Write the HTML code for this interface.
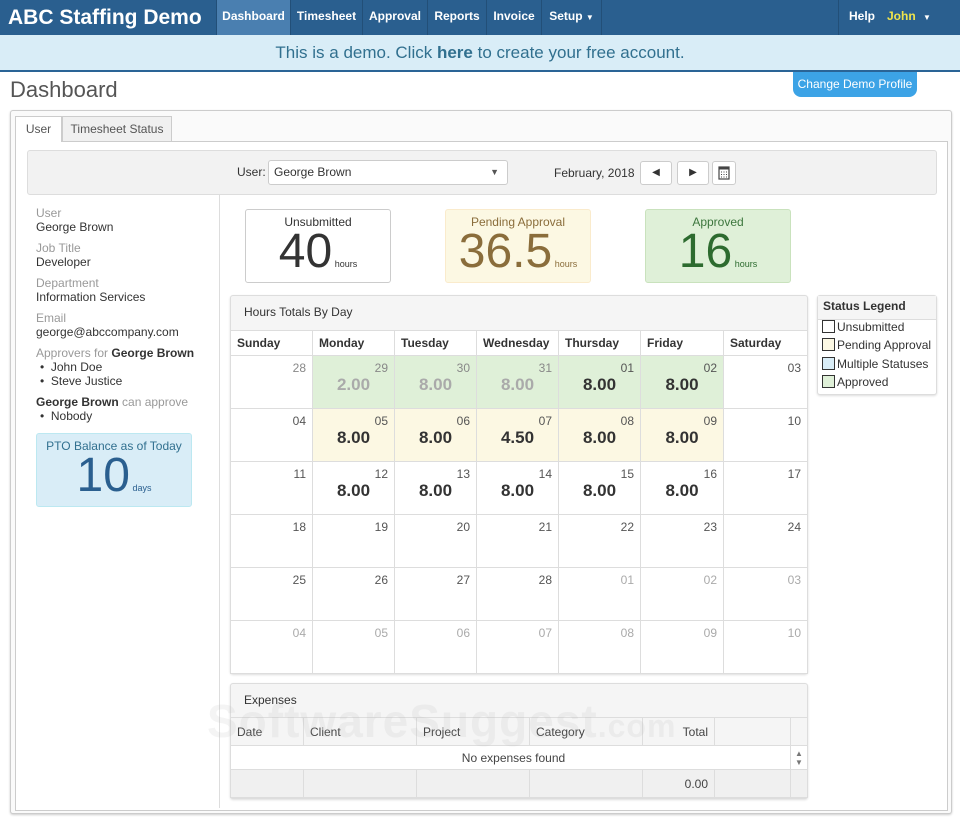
<!DOCTYPE html>
<html><head><meta charset="utf-8">
<style>
*{box-sizing:border-box;margin:0;padding:0}
body{width:960px;height:821px;position:relative;background:#fff;font-family:"Liberation Sans",Arial,sans-serif;color:#333;overflow:hidden;font-size:12px}
.a{position:absolute}
.nav{left:0;top:0;width:960px;height:35px;background:#2a5f8f}
.nav .it{position:absolute;top:0;height:35px;line-height:33px;color:#fff;font-weight:bold;font-size:12px;text-align:center;border-right:1px solid #224f78}
.banner{left:0;top:35px;width:960px;height:37px;background:#d9edf7;border-bottom:2px solid #2a6496;text-align:center;line-height:35px;font-size:17px;color:#31708f}
.lbl{color:#999;font-size:12px}
.val{color:#333;font-size:12px}
.stat{border-radius:3px;text-align:center}
.stat .t{font-size:12px;margin-top:5px}
.stat .n{font-size:48px;line-height:46px;margin-top:0px}
.stat .n small{font-size:9px}
table.cal{border-collapse:collapse;table-layout:fixed}
table.cal td{border:1px solid #ddd;height:53px;vertical-align:top;position:relative;padding:0}
table.cal th{border:1px solid #ddd;height:25px;text-align:left;padding-left:6px;font-size:12px;font-weight:bold;color:#333}
.d{position:absolute;right:6px;top:5px;font-size:12px;color:#555}
.h{position:absolute;left:0;right:0;top:19px;text-align:center;font-size:17px;font-weight:bold;color:#333}
.g{background:#dff0d8}.y{background:#fcf8e3}
.fd .h{color:#aaa}
.o .d{color:#aaa}
.btn{border:1px solid #ccc;border-radius:3px;background:#fff;height:24px;top:161px}
.ex td{border:1px solid #ddd;font-size:12px;padding-left:6px}
</style></head><body>
<div class="a nav">
 <div class="a" style="left:8px;top:0;line-height:35px;color:#fff;font-weight:bold;font-size:21px">ABC Staffing Demo</div>
 <div class="it" style="left:216px;width:75px;background:#4a7fb0;border-left:1px solid #224f78">Dashboard</div>
 <div class="it" style="left:291px;width:72px">Timesheet</div>
 <div class="it" style="left:363px;width:65px">Approval</div>
 <div class="it" style="left:428px;width:59px">Reports</div>
 <div class="it" style="left:487px;width:55px">Invoice</div>
 <div class="it" style="left:542px;width:60px">Setup <span style="font-size:8px">▼</span></div>
 <div class="it" style="left:838px;width:0;border-right:1px solid #224f78"></div>
 <div class="a" style="left:849px;top:0;line-height:33px;color:#fff;font-weight:bold">Help</div>
 <div class="a" style="left:887px;top:0;line-height:33px;color:#f0e54c;font-weight:bold">John <span style="color:#fff;font-size:8px;margin-left:4px">▼</span></div>
</div>
<div class="a banner">This is a demo. Click <b>here</b> to create your free account.</div>
<div class="a" style="left:10px;top:77px;font-size:22px;color:#555">Dashboard</div>
<div class="a" style="left:793px;top:72px;width:124px;height:25px;background:#3ca3e6;border-radius:0 0 8px 8px;color:#fff;font-size:12px;text-align:center;line-height:24px">Change Demo Profile</div>

<div class="a" style="left:10px;top:110px;width:942px;height:704px;border:1px solid #ccc;border-radius:3px;background:#fafafa;box-shadow:0 1px 2px #ccc"></div>
<div class="a" style="left:15px;top:141px;width:933px;height:670px;border:1px solid #ccc;background:#fff"></div>
<div class="a" style="left:15px;top:116px;width:47px;height:26px;border:1px solid #ccc;border-bottom:none;background:#fff;text-align:center;line-height:24px;color:#555">User</div>
<div class="a" style="left:62px;top:116px;width:110px;height:25px;border:1px solid #ccc;border-bottom:none;background:#f0f0f0;text-align:center;line-height:24px;color:#555">Timesheet Status</div>

<div class="a" style="left:27px;top:150px;width:910px;height:45px;background:#f2f2f2;border:1px solid #ddd;border-radius:3px"></div>
<div class="a" style="left:237px;top:165px;color:#333">User:</div>
<div class="a" style="left:268px;top:160px;width:240px;height:25px;border:1px solid #ccc;border-radius:3px;background:#fff;padding-left:5px;line-height:22px">George Brown<span style="position:absolute;right:8px;font-size:9px;color:#555">▼</span></div>
<div class="a" style="left:554px;top:166px">February, 2018</div>
<div class="a btn" style="left:640px;width:32px;text-align:center;line-height:22px;font-size:10px">◀</div>
<div class="a btn" style="left:677px;width:32px;text-align:center;line-height:22px;font-size:10px">▶</div>
<div class="a btn" style="left:712px;width:24px">
<svg width="22" height="22" viewBox="0 0 22 22"><rect x="6" y="5" width="10" height="12" fill="none" stroke="#444" stroke-width="1.2"/><rect x="6" y="5" width="10" height="2.5" fill="#444"/><path d="M8 10h1M10.5 10h1M13 10h1M8 12.5h1M10.5 12.5h1M13 12.5h1M8 15h1M10.5 15h1M13 15h1" stroke="#444"/></svg></div>

<div class="a" style="left:219px;top:195px;width:1px;height:613px;background:#ddd"></div>
<div class="a" style="left:36px;top:206px;line-height:14px">
<div class="lbl">User</div><div class="val">George Brown</div>
<div class="lbl" style="margin-top:7px">Job Title</div><div class="val">Developer</div>
<div class="lbl" style="margin-top:7px">Department</div><div class="val">Information Services</div>
<div class="lbl" style="margin-top:7px">Email</div><div class="val">george@abccompany.com</div>
<div class="lbl" style="margin-top:7px">Approvers for <b style="color:#333">George Brown</b></div>
<div class="val" style="padding-left:4px">•&nbsp; John Doe</div><div class="val" style="padding-left:4px">•&nbsp; Steve Justice</div>
<div class="lbl" style="margin-top:7px"><b style="color:#333">George Brown</b> can approve</div>
<div class="val" style="padding-left:4px">•&nbsp; Nobody</div>
</div>
<div class="a stat" style="left:36px;top:433px;width:156px;height:74px;background:#d9edf7;border:1px solid #bce8f1;color:#31708f">
<div class="t">PTO Balance as of Today</div><div class="n" style="color:#2a5f8f">10<small> days</small></div></div>

<div class="a stat" style="left:245px;top:209px;width:146px;height:74px;border:1px solid #ccc;color:#333"><div class="t">Unsubmitted</div><div class="n">40<small> hours</small></div></div>
<div class="a stat" style="left:445px;top:209px;width:146px;height:74px;background:#fcf8e3;border:1px solid #faebcc;color:#8a6d3b"><div class="t">Pending Approval</div><div class="n">36.5<small> hours</small></div></div>
<div class="a stat" style="left:645px;top:209px;width:146px;height:74px;background:#dff0d8;border:1px solid #c9e2bd;color:#3c763d"><div class="t">Approved</div><div class="n" style="color:#2d6b2f">16<small> hours</small></div></div>

<div class="a" style="left:230px;top:295px;width:578px;height:379px;border:1px solid #ddd;border-radius:3px;background:#f5f5f5;box-shadow:0 1px 2px #ddd"></div>
<div class="a" style="left:244px;top:305px;color:#333">Hours Totals By Day</div>
<table class="a cal" style="left:230px;top:330px;width:577px;background:#fff">
<colgroup><col style="width:82px"><col style="width:82px"><col style="width:82px"><col style="width:82px"><col style="width:82px"><col style="width:83px"><col style="width:84px"></colgroup>
<tr><th>Sunday</th><th>Monday</th><th>Tuesday</th><th>Wednesday</th><th>Thursday</th><th>Friday</th><th>Saturday</th></tr>
<tr><td><span class="d" style="color:#888">28</span></td><td class="g fd"><span class="d" style="color:#888">29</span><span class="h">2.00</span></td><td class="g fd"><span class="d" style="color:#888">30</span><span class="h">8.00</span></td><td class="g fd"><span class="d" style="color:#888">31</span><span class="h">8.00</span></td><td class="g"><span class="d">01</span><span class="h">8.00</span></td><td class="g"><span class="d">02</span><span class="h">8.00</span></td><td><span class="d">03</span></td></tr>
<tr><td><span class="d">04</span></td><td class="y"><span class="d">05</span><span class="h">8.00</span></td><td class="y"><span class="d">06</span><span class="h">8.00</span></td><td class="y"><span class="d">07</span><span class="h">4.50</span></td><td class="y"><span class="d">08</span><span class="h">8.00</span></td><td class="y"><span class="d">09</span><span class="h">8.00</span></td><td><span class="d">10</span></td></tr>
<tr><td><span class="d">11</span></td><td><span class="d">12</span><span class="h">8.00</span></td><td><span class="d">13</span><span class="h">8.00</span></td><td><span class="d">14</span><span class="h">8.00</span></td><td><span class="d">15</span><span class="h">8.00</span></td><td><span class="d">16</span><span class="h">8.00</span></td><td><span class="d">17</span></td></tr>
<tr><td><span class="d">18</span></td><td><span class="d">19</span></td><td><span class="d">20</span></td><td><span class="d">21</span></td><td><span class="d">22</span></td><td><span class="d">23</span></td><td><span class="d">24</span></td></tr>
<tr><td><span class="d">25</span></td><td><span class="d">26</span></td><td><span class="d">27</span></td><td><span class="d">28</span></td><td class="o"><span class="d">01</span></td><td class="o"><span class="d">02</span></td><td class="o"><span class="d">03</span></td></tr>
<tr class="o"><td><span class="d">04</span></td><td><span class="d">05</span></td><td><span class="d">06</span></td><td><span class="d">07</span></td><td><span class="d">08</span></td><td><span class="d">09</span></td><td><span class="d">10</span></td></tr>
</table>

<div class="a" style="left:817px;top:295px;width:120px;height:100px;border:1px solid #ddd;border-radius:3px;background:#fff;box-shadow:0 1px 2px #ddd"></div>
<div class="a" style="left:818px;top:296px;width:118px;height:24px;background:#f5f5f5;border-bottom:1px solid #ddd;padding-left:5px;line-height:20px;font-weight:bold">Status Legend</div>
<div class="a" style="left:822px;top:318px;line-height:18.3px;color:#333">
<div><span style="display:inline-block;width:13px;height:13px;border:1px solid #333;vertical-align:-2px;margin-right:2px"></span>Unsubmitted</div>
<div><span style="display:inline-block;width:13px;height:13px;border:1px solid #333;background:#fcf8e3;vertical-align:-2px;margin-right:2px"></span>Pending Approval</div>
<div><span style="display:inline-block;width:13px;height:13px;border:1px solid #333;background:#d9edf7;vertical-align:-2px;margin-right:2px"></span>Multiple Statuses</div>
<div><span style="display:inline-block;width:13px;height:13px;border:1px solid #333;background:#dff0d8;vertical-align:-2px;margin-right:2px"></span>Approved</div>
</div>

<div class="a" style="left:230px;top:683px;width:578px;height:116px;border:1px solid #ddd;border-radius:3px;background:#f5f5f5;box-shadow:0 1px 2px #ddd"></div>
<div class="a" style="left:244px;top:693px">Expenses</div>
<table class="a ex" style="left:230px;top:717px;width:577px;border-collapse:collapse;table-layout:fixed;color:#444">
<colgroup><col style="width:73px"><col style="width:113px"><col style="width:113px"><col style="width:113px"><col style="width:72px"><col style="width:76px"><col style="width:17px"></colgroup>
<tr style="height:28px;background:#f5f5f5"><td>Date</td><td>Client</td><td>Project</td><td>Category</td><td style="text-align:right;padding-right:6px">Total</td><td></td><td></td></tr>
<tr style="height:24px;background:#fff"><td colspan="6" style="text-align:center">No expenses found</td><td style="font-size:8px;color:#777;text-align:center;padding:0;line-height:9px">▲<br>▼</td></tr>
<tr style="height:28px;background:#f0f0f0"><td></td><td></td><td></td><td></td><td style="text-align:right;padding-right:6px">0.00</td><td></td><td></td></tr>
</table>
<div class="a" style="left:207px;top:694px;font-size:46px;font-weight:bold;color:rgba(180,180,180,0.15);letter-spacing:1px">SoftwareSuggest<span style="font-size:32px">.com</span></div>
</body></html>
